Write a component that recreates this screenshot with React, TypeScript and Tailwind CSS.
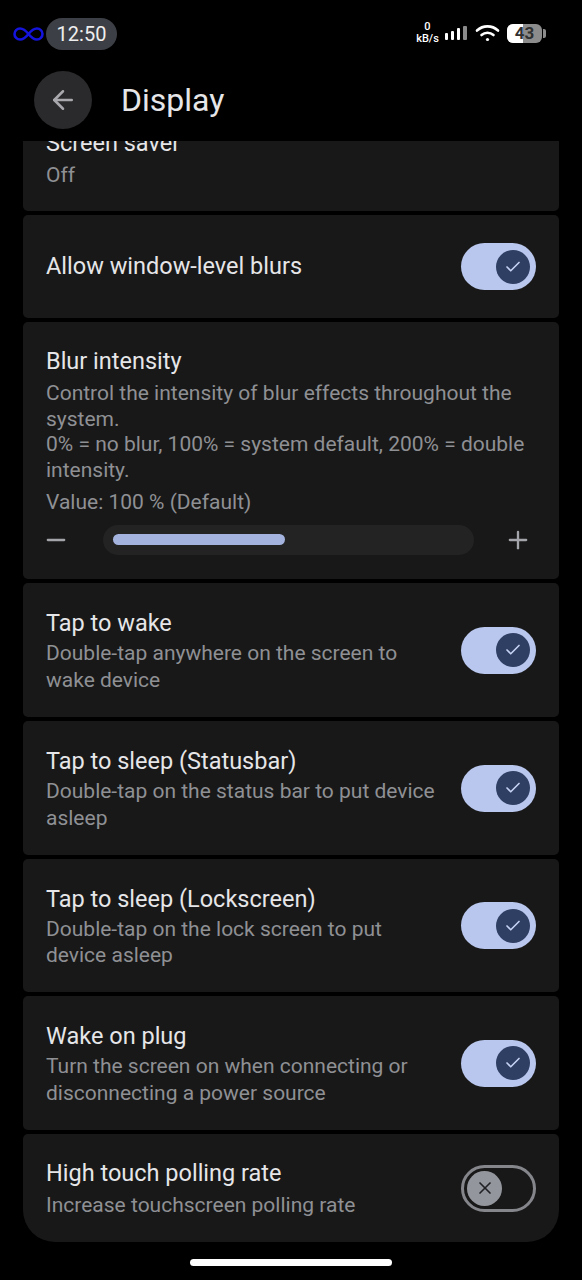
import { ArrowLeft, Check, Minus, Plus, X } from "lucide-react";

type Row = { title: string; lines: string[]; height: string; on?: boolean };

const rows: Row[] = [
  { title: "Tap to wake", lines: ["Double-tap anywhere on the screen to", "wake device"], height: "h-[134px]", on: true },
  { title: "Tap to sleep (Statusbar)", lines: ["Double-tap on the status bar to put device", "asleep"], height: "h-[134px]", on: true },
  { title: "Tap to sleep (Lockscreen)", lines: ["Double-tap on the lock screen to put", "device asleep"], height: "h-[133px]", on: true },
  { title: "Wake on plug", lines: ["Turn the screen on when connecting or", "disconnecting a power source"], height: "h-[134px]", on: true },
];

function Toggle({ on }: { on: boolean }) {
  if (on) {
    return (
      <div className="flex h-[47px] w-[75px] shrink-0 items-center justify-end rounded-full bg-[#b9c7ee] pr-[6px]">
        <div className="flex h-[34px] w-[34px] items-center justify-center rounded-full bg-[#2f3e63]">
          <Check className="h-[18px] w-[18px] text-[#c5d2f3]" strokeWidth={2.2} />
        </div>
      </div>
    );
  }
  return (
    <div className="flex h-[47px] w-[75px] shrink-0 items-center rounded-full border-[3px] border-[#85868c] pl-[3px]">
      <div className="flex h-[35px] w-[35px] items-center justify-center rounded-full bg-[#94969d]">
        <X className="h-[20px] w-[20px] text-[#202125]" strokeWidth={2} />
      </div>
    </div>
  );
}

function SettingRow({ row }: { row: Row }) {
  return (
    <div className={`flex ${row.height} items-center justify-between rounded-[5px] bg-[#181818] px-[23px]`}>
      <div className="pt-[2px]">
        <div className="mb-[2px] text-[23.5px] leading-[29px] text-[#e6e6e8]">{row.title}</div>
        {row.lines.map((line) => (
          <div key={line} className="mt-[0.5px] text-[21px] leading-[26px] text-[#8f9094]">
            {line}
          </div>
        ))}
      </div>
      <Toggle on={!!row.on} />
    </div>
  );
}

function StatusIcons() {
  return (
    <div className="flex items-center">
      <div className="mr-[4px] flex w-[25px] flex-col items-center text-[11px] font-medium leading-[12px] text-white">
        <span>0</span>
        <span>kB/s</span>
      </div>
      <svg width="24" height="17" viewBox="0 0 24 17" className="mr-[7px]">
        <rect x="1" y="8" width="3" height="7" rx="1" fill="#fff" />
        <rect x="7" y="6" width="3" height="9" rx="1" fill="#fff" />
        <rect x="13" y="3" width="3" height="12" rx="1" fill="#fff" />
        <rect x="19" y="1" width="4" height="14" rx="1" fill="#8a8a8a" />
      </svg>
      <svg width="25" height="18" viewBox="0 0 25 18" fill="none" stroke="#fff" strokeWidth="2.6" strokeLinecap="round" className="mr-[7px]">
        <path d="M2 6.5C8 1 17 1 23 6.5" />
        <path d="M6.5 11C10 8 15 8 18.5 11" />
        <circle cx="12.5" cy="15.5" r="1.6" fill="#fff" stroke="none" />
      </svg>
      <div className="relative flex h-[19px] w-[35px] items-center justify-center overflow-hidden rounded-[6px] bg-[#8c8c8c]">
        <div className="absolute inset-y-0 left-0 w-[16px] bg-white" />
        <span className="relative text-[17px] font-bold leading-none text-[#303030]">43</span>
      </div>
      <div className="ml-[1px] h-[9px] w-[3px] rounded-r-[2px] bg-[#8c8c8c]" />
    </div>
  );
}

export default function App() {
  return (
    <div
      className="flex h-[1280px] w-[582px] flex-col overflow-hidden bg-black"
      style={{ fontFamily: "Roboto, 'Noto Sans', sans-serif" }}
    >
      <div className="flex h-[71px] shrink-0 items-start justify-between pl-[13px] pr-[36px] pt-[18px]">
        <div className="flex items-center">
          <svg width="31" height="14" viewBox="0 0 31 14" fill="none" stroke="#1414dc" strokeWidth="2.6" className="mr-[2px]">
            <path d="M15.5 7C12 2.5 9.5 1.5 7 1.5a5.5 5.5 0 0 0 0 11c2.500 0 5-1 8.500-5.500s6-5.500 8.500-5.500a5.500 5.500 0 0 1 0 11c-2.500 0-5-1-8.500-5.500Z" />
          </svg>
          <div className="flex h-[32px] w-[71px] items-center justify-center rounded-full bg-[#3c3f45] text-[20px] text-[#eeeeee]">
            12:50
          </div>
        </div>
        <div className="pt-[3px]">
          <StatusIcons />
        </div>
      </div>

      <div className="flex h-[70px] shrink-0 items-start pl-[34px]">
        <div className="flex h-[58px] w-[58px] items-center justify-center rounded-full bg-[#2a2a2c]">
          <ArrowLeft className="h-[30px] w-[30px] text-[#a9a9ad]" strokeWidth={2} />
        </div>
        <div className="ml-[29px] pt-[7px] text-[32px] leading-[44px] text-[#e6e6e8]">Display</div>
      </div>

      <div className="flex flex-col gap-[4px] px-[23px]">
        <div className="h-[70px] overflow-hidden rounded-b-[5px] bg-[#181818] pl-[23px]">
          <div className="-mt-[13px] text-[23.5px] leading-[30px] text-[#e6e6e8]">Screen saver</div>
          <div className="text-[21px] leading-[34px] text-[#8f9094]">Off</div>
        </div>

        <div className="flex h-[103px] items-center justify-between rounded-[5px] bg-[#181818] px-[23px]">
          <div className="pt-[1px] text-[23.5px] text-[#e6e6e8]">Allow window-level blurs</div>
          <Toggle on />
        </div>

        <div className="h-[257px] rounded-[5px] bg-[#181818] px-[23px] pt-[24px]">
          <div className="text-[23.5px] leading-[30px] text-[#e6e6e8]">Blur intensity</div>
          <div className="mt-[5px] text-[21px] leading-[25.7px] text-[#8f9094]">
            <div>Control the intensity of blur effects throughout the</div>
            <div>system.</div>
            <div>0% = no blur, 100% = system default, 200% = double</div>
            <div>intensity.</div>
            <div className="mt-[6px]">Value: 100 % (Default)</div>
          </div>
          <div className="mt-[9px] flex items-center justify-between">
            <Minus className="-ml-[4px] h-[28px] w-[28px] text-[#a4a5aa]" strokeWidth={2} />
            <div className="ml-[33px] mr-[30px] flex h-[30px] flex-1 items-center rounded-full bg-[#232323] px-[10px]">
              <div className="h-[11px] w-[172px] rounded-full bg-[#a3b3de]" />
            </div>
            <Plus className="mr-[4px] h-[28px] w-[28px] text-[#a4a5aa]" strokeWidth={2} />
          </div>
        </div>

        {rows.map((row) => (
          <SettingRow key={row.title} row={row} />
        ))}

        <div className="flex h-[108px] items-center justify-between rounded-[5px] rounded-b-[32px] bg-[#181818] px-[23px]">
          <div className="pt-[1px]">
            <div className="text-[23.5px] leading-[29px] text-[#e6e6e8]">High touch polling rate</div>
            <div className="mt-[4px] text-[21px] leading-[26px] text-[#8f9094]">Increase touchscreen polling rate</div>
          </div>
          <Toggle on={false} />
        </div>
      </div>

      <div className="mt-[17px] flex justify-center">
        <div className="h-[7px] w-[202px] rounded-full bg-white" />
      </div>
    </div>
  );
}
